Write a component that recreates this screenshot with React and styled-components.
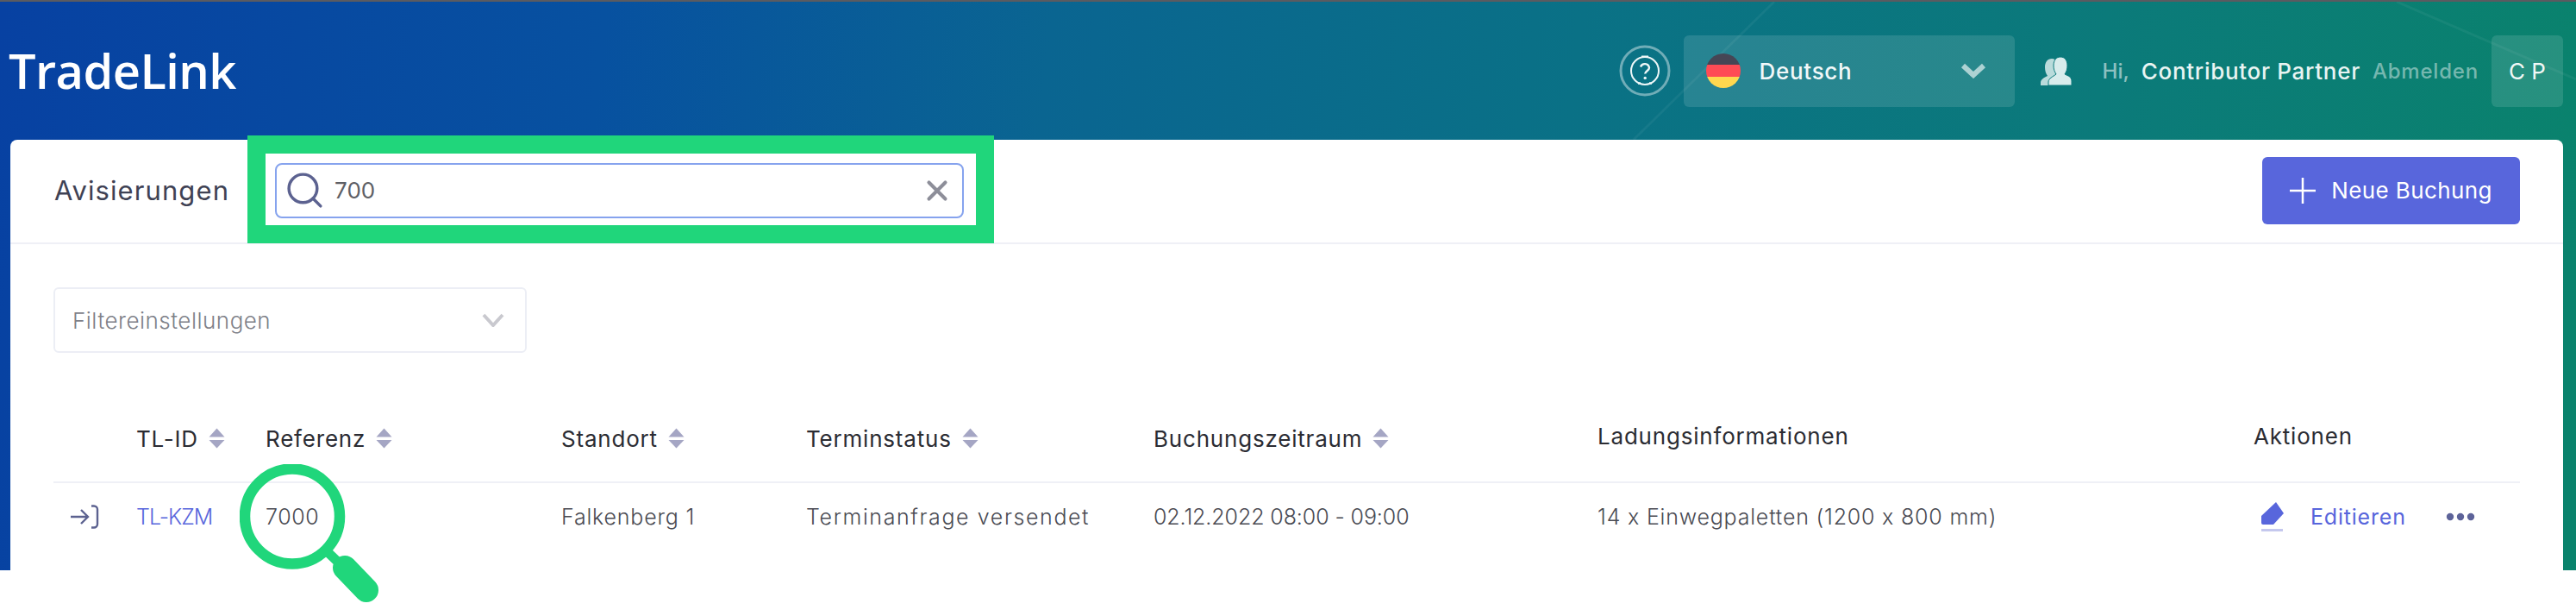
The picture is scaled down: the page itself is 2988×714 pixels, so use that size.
import React from 'react';
import styled, { createGlobalStyle } from 'styled-components';
import { Search, X } from 'lucide-react';

const columns = [
	{ label: 'TL-ID', sortable: true },
	{ label: 'Referenz', sortable: true },
	{ label: 'Standort', sortable: true },
	{ label: 'Terminstatus', sortable: true },
	{ label: 'Buchungszeitraum', sortable: true },
	{ label: 'Ladungsinformationen' },
	{ label: 'Aktionen' },
];

const SortCaret = () => (
	<CaretIcon viewBox='0 0 19 24'>
		<path d='M9.5 0.5L18.5 10.5H0.5Z' />
		<path d='M0.5 14H18.5L9.5 23.5Z' />
	</CaretIcon>
);

const App = () => {
	return (
		<Page>
			<GlobalStyle />
			<Hero>
				<HeroLines viewBox='0 0 2988 660' preserveAspectRatio='none'>
					<line x1='2058' y1='0' x2='1895' y2='160' />
					<line x1='2780' y1='0' x2='2988' y2='90' />
				</HeroLines>
				<TopBar>
					<Logo>TradeLink</Logo>
					<HelpIcon viewBox='0 0 60 60'>
						<circle cx='30' cy='30' r='28' fill='none' stroke='rgba(255,255,255,0.42)' strokeWidth='3' />
						<circle cx='30' cy='30' r='16' fill='none' stroke='#eef7f8' strokeWidth='2' />
						<path d='M26 13.5h8M22 45l3-1M38 45l-3-1' stroke='#eef7f8' strokeWidth='2' />
						<path
							d='M25 25.5a5.2 5.2 0 0 1 10 1c0 3.4-4.8 4-4.8 7'
							fill='none'
							stroke='#eef7f8'
							strokeWidth='2.4'
						/>
						<circle cx='30.2' cy='38.4' r='1.7' fill='#eef7f8' />
					</HelpIcon>
					<LanguageSelect>
						<FlagIcon viewBox='0 0 40 40'>
							<clipPath id='flagClip'>
								<circle cx='20' cy='20' r='20' />
							</clipPath>
							<g clipPath='url(#flagClip)'>
								<rect width='40' height='14' fill='#464655' />
								<rect y='13' width='40' height='14' fill='#ff4b55' />
								<rect y='27' width='40' height='13' fill='#ffd84f' />
							</g>
						</FlagIcon>
						<LanguageName>Deutsch</LanguageName>
						<LanguageChevron viewBox='0 0 30 18'>
							<path d='M3 3L15 14L27 3' />
						</LanguageChevron>
					</LanguageSelect>
					<UserIcon viewBox='0 0 36 33'>
						<path d='M13 2c5 0 7 4 7 9 0 4-2 7-3 9 4 2 9 4 10 7l1 6H0v-3c0-4 4-6 8-8-2-3-3-6-3-10 0-6 3-10 8-10z' opacity='0.85' />
						<path d='M23 0c5 0 8 4 8 10 0 4-1 7-3 10 4 2 8 3 8 8v5H9v-4c0-4 5-6 9-9-2-3-3-6-3-10 0-6 3-10 8-10z' stroke='#0b7a7c' strokeWidth='1' />
					</UserIcon>
					<Greeting>Hi,</Greeting>
					<UserName>Contributor Partner</UserName>
					<Logout>Abmelden</Logout>
					<Initials>C P</Initials>
				</TopBar>
				<Card>
					<CardHeader>
						<Title>Avisierungen</Title>
						<SearchBox>
							<Search size={49} strokeWidth={1.7} color='#5c6290' />
							<SearchValue>700</SearchValue>
							<ClearIcon>
								<X size={38} strokeWidth={2.6} color='#8d8e99' />
							</ClearIcon>
							<HighlightFrame />
						</SearchBox>
						<NewBooking>
							<PlusIcon viewBox='0 0 30 30'>
								<path d='M15 0V30M0 15H30' />
							</PlusIcon>
							Neue Buchung
						</NewBooking>
					</CardHeader>
					<CardBody>
						<FilterSelect>
							<FilterLabel>Filtereinstellungen</FilterLabel>
							<FilterChevron viewBox='0 0 26 16'>
								<path d='M2 2L13 14L24 2' />
							</FilterChevron>
						</FilterSelect>
						<HeadRow>
							<HeadCell />
							{columns.map((col) => (
								<HeadCell key={col.label} $raised={!col.sortable}>
									{col.label}
									{col.sortable && <SortCaret />}
								</HeadCell>
							))}
						</HeadRow>
						<BodyRow>
							<RowIconCell>
								<svg width='34' height='28' viewBox='0 0 34 28' fill='none' stroke='#5c6290' strokeWidth='2.4'>
									<path d='M1 14H21M13 6l8 8-8 8' />
									<path d='M25 1.5h3a4 4 0 0 1 4 4v17a4 4 0 0 1-4 4h-3' />
								</svg>
							</RowIconCell>
							<LinkCell>TL-KZM</LinkCell>
							<ReferenceCell>
								7000
								<MagnifierIcon viewBox='0 0 165 165'>
									<circle cx='61' cy='60.5' r='55' fill='none' stroke='#20d67b' strokeWidth='12.5' />
									<path d='M98 98L125 124' stroke='#20d67b' strokeWidth='11' />
									<path d='M122 120L147 146' stroke='#20d67b' strokeWidth='28' strokeLinecap='round' />
								</MagnifierIcon>
							</ReferenceCell>
							<Cell>Falkenberg 1</Cell>
							<StatusCell>Terminanfrage versendet</StatusCell>
							<DateCell>02.12.2022 08:00 - 09:00</DateCell>
							<Cell>14 x Einwegpaletten (1200 x 800 mm)</Cell>
							<ActionCell>
								<EditIcon viewBox='0 0 26 34'>
									<path d='M17 0L26 13L14 26H2a2 2 0 0 1-2-2V16Z' fill='#5866dc' />
									<rect y='31' width='25' height='3' fill='#c5c8ee' />
								</EditIcon>
								<EditLink>Editieren</EditLink>
								<MoreIcon viewBox='0 0 34 10'>
									<circle cx='5' cy='5' r='4.2' />
									<circle cx='17' cy='5' r='4.2' />
									<circle cx='29' cy='5' r='4.2' />
								</MoreIcon>
							</ActionCell>
						</BodyRow>
					</CardBody>
				</Card>
			</Hero>
		</Page>
	);
};

const GlobalStyle = createGlobalStyle`
	body {
		margin: 0;
		background: #fff;
		font-family: 'Inter', 'Liberation Sans', sans-serif;
	}
`;

const Page = styled.div`
	width: 2988px;
	height: 714px;
	overflow: hidden;
	background: #fff;
`;

const Hero = styled.section`
	position: relative;
	box-sizing: border-box;
	height: 661px;
	border-top: 2px solid #5b5b60;
	background: linear-gradient(96deg, #0741a2 0%, #0751a0 23%, #0a6591 40%, #0a7186 60%, #0b7a7a 80%, #0a836c 100%);
	display: flex;
	flex-direction: column;
`;

const HeroLines = styled.svg`
	position: absolute;
	inset: 0;
	width: 100%;
	height: 100%;
	stroke: rgba(255, 255, 255, 0.05);
	stroke-width: 3;
`;

const TopBar = styled.header`
	position: relative;
	height: 160px;
	flex: none;
	display: flex;
	align-items: center;
	padding: 0 15px 0 10px;
`;

const Logo = styled.div`
	padding-bottom: 3px;
	font-family: 'Open Sans', sans-serif;
	font-size: 56px;
	font-weight: 600;
	letter-spacing: -0.6px;
	color: #fff;
	margin-right: auto;
`;

const HelpIcon = styled.svg`
	width: 60px;
	height: 60px;
	margin-right: 15px;
`;

const LanguageSelect = styled.div`
	box-sizing: border-box;
	width: 384px;
	height: 83px;
	display: flex;
	align-items: center;
	padding: 0 33px 0 26px;
	border-radius: 6px;
	background: rgba(255, 255, 255, 0.12);
`;

const FlagIcon = styled.svg`
	width: 40px;
	height: 40px;
`;

const LanguageName = styled.span`
	margin-left: 22px;
	font-size: 26px;
	font-weight: 500;
	letter-spacing: 0.7px;
	color: #f1f8f9;
`;

const LanguageChevron = styled.svg`
	width: 30px;
	height: 18px;
	margin-left: auto;
	fill: none;
	stroke: rgba(255, 255, 255, 0.62);
	stroke-width: 6;
`;

const UserIcon = styled.svg`
	width: 36px;
	height: 33px;
	margin-left: 30px;
	fill: #d8ecec;
`;

const Greeting = styled.span`
	margin-left: 36px;
	font-size: 24px;
	font-weight: 500;
	color: rgba(255, 255, 255, 0.55);
`;

const UserName = styled.span`
	margin-left: 14px;
	font-size: 26px;
	font-weight: 500;
	letter-spacing: 0.7px;
	color: #e8f4f2;
`;

const Logout = styled.span`
	margin-left: 14px;
	font-size: 24px;
	font-weight: 500;
	letter-spacing: 0.8px;
	color: rgba(255, 255, 255, 0.45);
`;

const Initials = styled.div`
	box-sizing: border-box;
	width: 83px;
	height: 83px;
	margin-left: 15px;
	display: flex;
	align-items: center;
	justify-content: center;
	border-radius: 6px;
	background: rgba(255, 255, 255, 0.12);
	font-size: 26px;
	color: #f1f8f6;
`;

const Card = styled.main`
	position: relative;
	flex: 1;
	margin: 0 15px 0 12px;
	border-radius: 8px 8px 0 0;
	background: #fff;
`;

const CardHeader = styled.div`
	box-sizing: border-box;
	height: 121px;
	display: flex;
	align-items: center;
	padding: 0 50px 2px 51px;
	border-bottom: 2px solid #eff0f6;
`;

const Title = styled.h1`
	margin: 0;
	font-size: 31px;
	font-weight: 400;
	letter-spacing: 1.1px;
	color: #3f4254;
`;

const SearchBox = styled.div`
	position: relative;
	box-sizing: border-box;
	width: 799px;
	height: 64px;
	margin-left: 53px;
	display: flex;
	align-items: center;
	padding: 0 10px 0 8px;
	border: 2px solid #86a3ee;
	border-radius: 8px;
	background: #fff;
`;

const SearchValue = styled.span`
	margin-left: 10px;
	font-size: 26px;
	color: #5e6066;
`;

const ClearIcon = styled.span`
	display: flex;
	margin-left: auto;
`;

const HighlightFrame = styled.div`
	position: absolute;
	top: -34px;
	left: -34px;
	right: -37px;
	bottom: -31px;
	border: 21px solid #20d67b;
	pointer-events: none;
`;

const NewBooking = styled.button`
	width: 299px;
	height: 78px;
	margin-left: auto;
	display: flex;
	align-items: center;
	justify-content: center;
	gap: 18px;
	border: none;
	border-radius: 6px;
	background: #5866dc;
	font-family: inherit;
	font-size: 26px;
	font-weight: 400;
	letter-spacing: 0.4px;
	color: #fff;
`;

const PlusIcon = styled.svg`
	width: 30px;
	height: 30px;
	fill: none;
	stroke: #fff;
	stroke-width: 2.5;
`;

const CardBody = styled.div`
	padding: 50px 50px 0;
`;

const FilterSelect = styled.div`
	box-sizing: border-box;
	width: 549px;
	height: 76px;
	display: flex;
	align-items: center;
	justify-content: space-between;
	padding: 0 24px 0 20px;
	border: 2px solid #eceef5;
	border-radius: 6px;
`;

const FilterLabel = styled.span`
	font-size: 26px;
	font-weight: 300;
	letter-spacing: 0.5px;
	color: #7e8088;
`;

const FilterChevron = styled.svg`
	width: 26px;
	height: 16px;
	fill: none;
	stroke: #c9c9cf;
	stroke-width: 4;
`;

const gridColumns = '96px 150px 343px 284px 403px 515px 761px 309px';

const HeadRow = styled.div`
	display: grid;
	grid-template-columns: ${gridColumns};
	height: 102px;
	margin-top: 47px;
	border-bottom: 2px solid #eff0f6;
`;

const HeadCell = styled.div`
	display: flex;
	align-items: center;
	gap: 12px;
	padding-top: 2px;
	padding-bottom: ${(props) => (props.$raised ? '6px' : '0')};
	font-size: 26px;
	font-weight: 400;
	letter-spacing: 0.8px;
	color: #2b2c33;
`;

const CaretIcon = styled.svg`
	width: 19px;
	height: 24px;
	fill: #a5a6c4;
`;

const BodyRow = styled.div`
	display: grid;
	grid-template-columns: ${gridColumns};
	height: 78px;
	align-items: center;
`;

const Cell = styled.div`
	position: relative;
	font-size: 25px;
	font-weight: 300;
	letter-spacing: 0.8px;
	color: #4a4b53;
`;

const RowIconCell = styled(Cell)`
	display: flex;
	padding-left: 19px;
`;

const LinkCell = styled(Cell)`
	letter-spacing: -1px;
	color: #5866dc;
`;

const ReferenceCell = styled(Cell)`
	letter-spacing: 0.6px;
`;

const StatusCell = styled(Cell)`
	letter-spacing: 1.6px;
`;

const DateCell = styled(Cell)`
	letter-spacing: -0.1px;
`;

const MagnifierIcon = styled.svg`
	position: absolute;
	top: -46px;
	left: -30px;
	width: 165px;
	height: 165px;
`;

const ActionCell = styled(Cell)`
	display: flex;
	align-items: center;
`;

const EditIcon = styled.svg`
	width: 26px;
	height: 34px;
	margin-left: 9px;
`;

const EditLink = styled.span`
	margin-left: 31px;
	font-weight: 400;
	color: #5866dc;
`;

const MoreIcon = styled.svg`
	width: 34px;
	height: 10px;
	margin-left: 46px;
	fill: #5d6399;
`;

export default App;
